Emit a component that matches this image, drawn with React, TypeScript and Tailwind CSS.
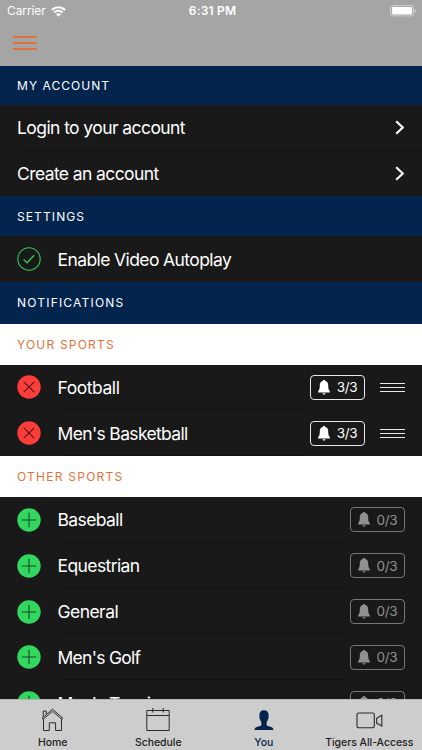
import React from 'react';

interface Sport {
  name: string;
  alerts: string;
  textClass: string;
}

const yourSports: Sport[] = [
  { name: 'Football', alerts: '3/3', textClass: 'tracking-[-0.45px]' },
  { name: "Men's Basketball", alerts: '3/3', textClass: 'tracking-[-0.65px]' },
];

const otherSports: Sport[] = [
  { name: 'Baseball', alerts: '0/3', textClass: 'tracking-[-0.6px]' },
  { name: 'Equestrian', alerts: '0/3', textClass: 'tracking-[-0.6px]' },
  { name: 'General', alerts: '0/3', textClass: 'tracking-[-0.55px]' },
  { name: "Men's Golf", alerts: '0/3', textClass: 'tracking-[-0.72px]' },
  { name: "Men's Tennis", alerts: '0/3', textClass: 'tracking-[-0.72px]' },
];

const WifiIcon = () => (
  <svg width="15" height="11" viewBox="0 0 15 11" fill="none" stroke="white" strokeWidth="2.1">
    <path d="M.9 4C4.700.4 10.300.4 14.100 4" />
    <path d="M3.300 6.500C5.700 4.200 9.300 4.200 11.700 6.500" />
    <path d="M7.500 10.800 5 8.300c1.400-1.300 3.600-1.300 5 0z" fill="white" stroke="none" />
  </svg>
);

const BatteryIcon = () => (
  <svg width="27" height="12" viewBox="0 0 27 12" fill="none">
    <rect x="0.6" y="0.6" width="23" height="10.3" rx="2.2" stroke="#d0d0d0" strokeWidth="1" />
    <rect x="2.1" y="2.1" width="20" height="7.3" rx="0.8" fill="white" />
    <path d="M24.8 4v3.7c1-.3 1.5-1 1.5-1.85S25.8 4.3 24.8 4z" fill="#d0d0d0" />
  </svg>
);

const BellIcon = () => (
  <svg width="12" height="15" viewBox="0 0 12 15" fill="currentColor">
    <path d="M6 0c-.8 0-1.3.5-1.3 1.1C2.8 1.7 1.800 3.200 1.800 5.300c0 3.500-.5 4.700-1.700 6.200v1h11.800v-1c-1.200-1.500-1.700-2.700-1.700-6.200 0-2.100-1-3.600-2.900-4.200C7.300.5 6.800 0 6 0zM4.400 13.200c.2.800.8 1.300 1.600 1.300s1.400-.5 1.600-1.300z" />
  </svg>
);

const CheckIcon = () => (
  <svg width="24" height="24" viewBox="0 0 24 24" fill="none" stroke="#35c759">
    <circle cx="12" cy="12" r="11.200" strokeWidth="1.100" />
    <path d="M6.600 12.400 10 15.800 17.200 8.200" strokeWidth="1.300" />
  </svg>
);

const RemoveIcon = () => (
  <svg width="24" height="24" viewBox="0 0 24 24" fill="none">
    <circle cx="12" cy="12" r="11.700" fill="#fc3d39" />
    <path d="M6.800 6.800 17.200 17.200M17.200 6.800 6.800 17.200" stroke="#4a1716" strokeWidth="1.100" />
  </svg>
);

const AddIcon = () => (
  <svg width="24" height="24" viewBox="0 0 24 24" fill="none">
    <circle cx="12" cy="12" r="11.700" fill="#33d760" />
    <path d="M12 4.800v14.400M4.800 12h14.400" stroke="#174a25" strokeWidth="1.100" />
  </svg>
);

const DragHandle = () => (
  <svg width="25" height="11" viewBox="0 0 25 11" stroke="#e8e8e8" strokeWidth="1.200">
    <path d="M0 1.500h25M0 5.500h25M0 9.500h25" />
  </svg>
);

const ChevronIcon = () => (
  <svg width="10" height="15" viewBox="0 0 10 15" fill="none" stroke="white" strokeWidth="2.100">
    <path d="M1.200 1.200 7.800 7.500 1.200 13.800" />
  </svg>
);

const HomeIcon = () => (
  <svg width="23" height="24" viewBox="0 0 23 24" fill="none" stroke="#2b2b2b" strokeWidth="1">
    <path d="M1 10.300 11.500 1.200 22 10.300M2.200 11.200 11.500 3.300 20.800 11.200M1 10.300l1.200.9M22 10.300l-1.200.9" />
    <path d="M2.200 8.800V3h3v3.300" />
    <path d="M2.500 11v11.500h5.800v-7.700h6.300v7.700h5.900V11" />
  </svg>
);

const CalendarIcon = () => (
  <svg width="24" height="24" viewBox="0 0 24 24" fill="none" stroke="#2b2b2b" strokeWidth="1">
    <path d="M.8 2.500h22.400v20H.8zM.8 7.500h22.400M6.800 0v4.500M17.200 0v4.500" />
  </svg>
);

const PersonIcon = () => (
  <svg width="20" height="21" viewBox="0 0 20 21" fill="#03244d">
    <path d="M10 .3C7 .3 5.400 2.300 5.400 5.200c0 .9.100 1.500.2 2-.5.800 0 1.900.6 2.300.2 1 .6 1.900 1.200 2.600v2.600c-.5 1-1.500 1.400-3.200 1.900C1.800 17.300.5 18 .5 20h19c0-2-1.300-2.700-3.700-3.400-1.700-.5-2.700-.9-3.200-1.900v-2.600c.6-.7 1-1.600 1.200-2.600.6-.4 1.100-1.500.6-2.300.1-.5.200-1.100.2-2C14.600 2.300 13 .3 10 .3z" />
  </svg>
);

const VideoIcon = () => (
  <svg width="27" height="17" viewBox="0 0 27 17" fill="none" stroke="#2b2b2b" strokeWidth="1.100">
    <rect x="1" y="1" width="17.300" height="14.800" rx="1.700" />
    <path d="M25.800 3.200v10.800L20.600 11.100V6.200z" />
  </svg>
);

const SectionHeader: React.FC<{ title: string; className: string }> = ({ title, className }) => (
  <div className={`flex shrink-0 items-center pt-px pl-[17px] text-[12px] ${className}`}>{title}</div>
);

const AccountRow: React.FC<{ label: string; className: string }> = ({ label, className }) => (
  <div className="flex h-[45px] shrink-0 items-center justify-between pr-[17px] pl-[17px]">
    <span className={`pt-[2px] ${className}`}>{label}</span>
    <ChevronIcon />
  </div>
);

const SportRow: React.FC<{ sport: Sport; followed?: boolean }> = ({ sport, followed }) => (
  <div className="flex h-[45.8px] shrink-0 items-center pr-[17px] pl-[16.500px]">
    {followed ? <RemoveIcon /> : <AddIcon />}
    <div className="ml-[17px] flex h-full grow items-center border-b border-[#121212]">
      <span className={`pt-[2px] ${sport.textClass}`}>{sport.name}</span>
    </div>
    <div
      className={`flex h-[25px] w-[55px] items-center justify-center gap-[7px] rounded-[4px] border text-[13.500px] ${
        followed ? 'border-[#e8e8e8] text-white' : 'border-[#777777] text-[#909090]'
      }`}
    >
      <BellIcon />
      <span className="tracking-[-0.3px]">{sport.alerts}</span>
    </div>
    {followed && (
      <div className="ml-[15px]">
        <DragHandle />
      </div>
    )}
  </div>
);

const TabItem: React.FC<{ label: string; className: string; children: React.ReactNode }> = ({ label, className, children }) => (
  <div className={`flex flex-1 flex-col items-center whitespace-nowrap ${className}`}>
    <div className="mt-[7px] flex h-[26px] items-center">{children}</div>
    <span className="mt-[3px] text-[10.500px] leading-[14px] font-medium tracking-[-0.05px]">{label}</span>
  </div>
);

export default function App() {
  return (
    <div className="flex h-[750px] w-[422px] flex-col overflow-hidden bg-[#191919] font-['Inter','Liberation_Sans',sans-serif] text-[17.500px] text-white">
      <header className="h-[65.500px] shrink-0 bg-[#a5a5a5]">
        <div className="grid h-[22px] grid-cols-3 items-center pr-[5px] pl-[7px] text-[12px] leading-none">
          <div className="flex items-center gap-[5px]">
            <span className="tracking-[-0.1px]">Carrier</span>
            <WifiIcon />
          </div>
          <span className="pl-px text-center font-semibold tracking-[0.2px]">6:31 PM</span>
          <div className="flex justify-end">
            <BatteryIcon />
          </div>
        </div>
        <div className="mt-[14px] ml-[13px] flex w-6 flex-col gap-1">
          <div className="h-[2px] bg-[#dd7440]" />
          <div className="h-[2px] bg-[#dd7440]" />
          <div className="h-[2px] bg-[#dd7440]" />
        </div>
      </header>

      <main className="flex min-h-0 grow flex-col overflow-hidden">
        <SectionHeader title="MY ACCOUNT" className="h-[39.500px] bg-[#03244d] tracking-[1.05px]" />
        <AccountRow label="Login to your account" className="tracking-[-0.580px]" />
        <div className="ml-[17px] h-px shrink-0 bg-[#121212]" />
        <AccountRow label="Create an account" className="tracking-[-0.600px]" />
        <SectionHeader title="SETTINGS" className="h-[40px] bg-[#03244d] tracking-[1.1px]" />
        <div className="flex h-[46px] shrink-0 items-center gap-[17px] pl-[16.500px]">
          <CheckIcon />
          <span className="pt-[2px] tracking-[-0.600px]">Enable Video Autoplay</span>
        </div>
        <SectionHeader title="NOTIFICATIONS" className="h-[41.500px] bg-[#03244d] tracking-[1.2px]" />
        <SectionHeader title="YOUR SPORTS" className="h-[41px] bg-white tracking-[1.2px] text-[#e3733b]" />
        {yourSports.map((sport) => (
          <SportRow key={sport.name} sport={sport} followed />
        ))}
        <SectionHeader title="OTHER SPORTS" className="h-[41px] bg-white tracking-[1.25px] text-[#e3733b]" />
        {otherSports.map((sport) => (
          <SportRow key={sport.name} sport={sport} />
        ))}
      </main>

      <nav className="flex h-[51px] shrink-0 border-t border-[#b5b5b5] bg-[#cdcdcd] text-[#222222]">
        <TabItem label="Home" className="">
          <HomeIcon />
        </TabItem>
        <TabItem label="Schedule" className="">
          <CalendarIcon />
        </TabItem>
        <TabItem label="You" className="text-[#03244d]">
          <PersonIcon />
        </TabItem>
        <TabItem label="Tigers All-Access" className="">
          <VideoIcon />
        </TabItem>
      </nav>
    </div>
  );
}
